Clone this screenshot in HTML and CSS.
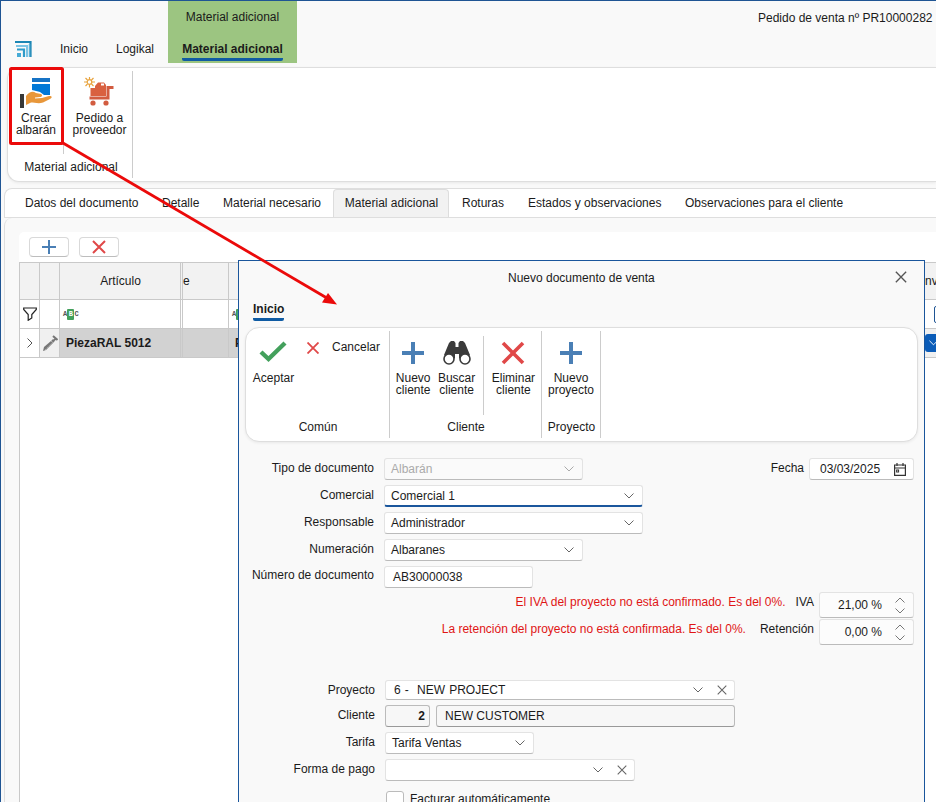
FILE: index.html
```html
<!DOCTYPE html>
<html lang="es">
<head>
<meta charset="utf-8">
<title>Pedido de venta</title>
<link rel="stylesheet" href="styles.css">
</head>
<body>
<svg class="defs" width="0" height="0">
  <symbol id="chev" viewBox="0 0 10 6"><path d="M.5 .5 5 5 9.500 .5" fill="none" stroke="currentColor"/></symbol>
  <symbol id="x" viewBox="0 0 10 10"><path d="M.7 .7 9.300 9.300M9.300 .7 .7 9.300" fill="none" stroke="currentColor" stroke-width="1.100"/></symbol>
  <symbol id="bigx" viewBox="0 0 24 24"><path d="M2 2 22 22M22 2 2 22" fill="none" stroke="currentColor" stroke-width="3.600"/></symbol>
  <symbol id="plus" viewBox="0 0 22 22"><path d="M11 0V22M0 11H22" fill="none" stroke="currentColor" stroke-width="4"/></symbol>
</svg>
<main class="window">
  <header class="titlebar">
    <nav class="menu">
      <svg class="logo" width="17" height="17" viewBox="0 0 17 17"><path d="M0 1H15.500V16" fill="none" stroke="#1c86b4" stroke-width="2.200"/><path d="M1 5H12V16" fill="none" stroke="#7cc4e4" stroke-width="2"/><path d="M2 8.500H9V16" fill="none" stroke="#2f9bc9" stroke-width="2.200"/><path d="M14.500 3V16" stroke="#5cb0d6" stroke-width="1.500"/><rect x="2" y="12" width="4" height="4" fill="#46abd6"/></svg>
      <span class="m-inicio">Inicio</span><span class="m-logikal">Logikal</span>
    </nav>
    <div class="context"><span>Material adicional</span><b>Material adicional</b></div>
    <span class="doc">Pedido de venta nº PR10000282</span>
  </header>
  <section class="ribbon">
    <div class="rgroup">
      <div class="rbuttons">
        <div class="rbtn first">
          <svg width="34" height="33" viewBox="0 0 34 33"><rect x="13" y="2" width="18" height="4" fill="#1673c5"/><path d="M13 8H31V19H25L21 16 13 14Z" fill="#0078d7"/><rect x="1" y="18" width="4" height="14" fill="#383838"/><path d="M7 20C11 15 14 15 17 17L22 18C24 19 23 21 21 21L16 21.500 16 22.500 23 22 30 20C34 20 33 22 31 23L24 26.500C20 28 15 26.500 12 26.500L7 29Z" fill="#e8973a"/></svg>
          <span>Crear<br>albarán</span>
        </div>
        <div class="rbtn second">
          <svg width="32" height="33" viewBox="0 0 32 33"><g stroke="#e8a33d" stroke-width="1.200" fill="none"><circle cx="6.500" cy="6" r="2.300"/><path d="M6.500 1V3M6.500 9V11.500M1 6H4M9 6H12M2.500 2 4.500 4M8.500 8 10.500 10M10.500 2 8.500 4M4.500 8 2.500 10"/></g><path d="M12 10 15 6.500H21L23 9V20H7.500V12H12Z" fill="#d9603f"/><rect x="18" y="7.500" width="3" height="2" fill="#fff"/><path d="M30.500 11.500H25V22H6.500" fill="none" stroke="#d25c40" stroke-width="3"/><circle cx="10" cy="27" r="2.600" fill="#d25c40"/><circle cx="23" cy="27" r="2.600" fill="#d25c40"/></svg>
          <span>Pedido a<br>proveedor</span>
        </div>
      </div>
      <div class="rcaption">Material adicional</div>
    </div>
  </section>
  <nav class="tabs">
    <span class="t1">Datos del documento</span><span class="t2">Detalle</span><span class="t3">Material necesario</span><span class="t4">Material adicional</span><span class="t5">Roturas</span><span class="t6">Estados y observaciones</span><span>Observaciones para el cliente</span>
  </nav>
  <section class="content">
    <div class="sheet">
      <div class="tools">
        <span class="tool blue"><svg width="14" height="14" viewBox="0 0 14 14"><path d="M7 0V14M0 7H14" stroke="currentColor" stroke-width="2"/></svg></span>
        <span class="tool red"><svg width="14" height="14" viewBox="0 0 14 14"><path d="M1 1 13 13M13 1 1 13" stroke="currentColor" stroke-width="2"/></svg></span>
      </div>
      <div class="grid">
        <div class="row head"><i></i><i></i><i class="art">Artículo</i><i class="e">e</i><i class="wide"></i><i class="end">nv</i></div>
        <div class="row filter">
          <i><svg width="14" height="14" viewBox="0 0 14 14"><path d="M.7 1H13.300V2.500L8.800 7.500V11L5.200 13.300V7.500L.7 2.500Z" fill="none" stroke="#222" stroke-width="1.200"/></svg></i><i></i>
          <i class="abc"><small>A<mark>B</mark>C</small></i><i></i><i class="wide abc"><small>A<mark>B</mark>C</small></i><i class="end"><span class="box"></span></i>
        </div>
        <div class="row data">
          <i><svg class="turn" width="10" height="6"><use href="#chev"/></svg></i>
          <i class="pen"><svg width="16" height="17" viewBox="0 0 16 17"><path d="M1 16 2 12 9 6 11 8 4 15Z" fill="#777"/><path d="M3 15 11 7" stroke="#aaa" stroke-dasharray="2 1"/><path d="M10 5 12 7M11 6 14 3.500M11 1 15.500 5" stroke="#777" stroke-width="2"/></svg></i>
          <i class="name">PiezaRAL 5012</i><i></i><i class="wide name2">P</i><i class="end"><span class="checked"><svg width="9" height="6"><use href="#chev"/></svg></span></i>
        </div>
        <div class="row rest"><i></i><i class="end"></i></div>
      </div>
    </div>
  </section>

  <section class="dialog">
    <header class="dtitle"><span>Nuevo documento de venta</span><svg width="12" height="12"><use href="#x"/></svg></header>
    <div class="dtab"><b>Inicio</b></div>
    <div class="dribbon">
      <div class="dgroup comun">
        <div class="dbtns">
          <div class="dbtn"><svg width="28" height="22" viewBox="0 0 28 22"><path d="M2 11 9.500 18 26 2" fill="none" stroke="#43a05c" stroke-width="4.400"/></svg><span>Aceptar</span></div>
          <div class="cancel"><svg width="12" height="12" viewBox="0 0 12 12"><path d="M.5 .5 11.500 11.500M11.500 .5 .5 11.500" stroke="#e04848" stroke-width="1.800"/></svg><span>Cancelar</span></div>
        </div>
        <div class="dcap">Común</div>
      </div>
      <div class="dgroup cliente">
        <div class="dbtns">
          <div class="dbtn"><svg class="blue" width="22" height="22"><use href="#plus"/></svg><span>Nuevo<br>cliente</span></div>
          <div class="dbtn bus"><svg width="28" height="24" viewBox="0 0 28 24"><path d="M8 0H11L12.500 2V6H15.500V2L17 0H20L22 2 27 14 21 21 16 17V13H12V17L7 21 1 14 6 2Z" fill="#3b3b3b"/><g fill="#fff" stroke="#3b3b3b" stroke-width="1.600"><circle cx="6" cy="18" r="5"/><circle cx="22" cy="18" r="5"/></g></svg><span>Buscar<br>cliente</span></div>
          <div class="dbtn eli"><svg class="red" width="24" height="24"><use href="#bigx"/></svg><span>Eliminar<br>cliente</span></div>
        </div>
        <div class="dcap">Cliente</div>
      </div>
      <div class="dgroup proyecto">
        <div class="dbtns"><div class="dbtn"><svg class="blue" width="22" height="22"><use href="#plus"/></svg><span>Nuevo<br>proyecto</span></div></div>
        <div class="dcap">Proyecto</div>
      </div>
    </div>
    <form class="form">
      <div class="frow"><label>Tipo de documento</label><div class="field w199 disabled"><span>Albarán</span><svg width="10" height="6"><use href="#chev"/></svg></div>
        <div class="right"><label>Fecha</label><div class="field date"><span>03/03/2025</span><svg width="12" height="13" viewBox="0 0 12 13"><path d="M.6 2H11.400V12.400H.6ZM.6 5H11.400M3 0V3M9 0V3" fill="none" stroke="#333" stroke-width="1.200"/><rect x="2.600" y="7" width="2" height="2" fill="none" stroke="#333"/></svg></div></div></div>
      <div class="frow"><label>Comercial</label><div class="field w259 focus"><span>Comercial 1</span><svg width="10" height="6"><use href="#chev"/></svg></div></div>
      <div class="frow"><label>Responsable</label><div class="field w259"><span>Administrador</span><svg width="10" height="6"><use href="#chev"/></svg></div></div>
      <div class="frow"><label>Numeración</label><div class="field w199"><span>Albaranes</span><svg width="10" height="6"><use href="#chev"/></svg></div></div>
      <div class="frow num"><label>Número de documento</label><div class="field w149"><span>AB30000038</span></div></div>
      <div class="tax"><span class="warn">El IVA del proyecto no está confirmado. Es del 0%.</span><span class="tl">IVA</span><div class="field spin"><span>21,00 %</span><div class="arrows"><svg class="up" width="10" height="6"><use href="#chev"/></svg><svg width="10" height="6"><use href="#chev"/></svg></div></div></div>
      <div class="tax second-tax"><span class="warn">La retención del proyecto no está confirmada. Es del 0%.</span><span class="tl ret">Retención</span><div class="field spin"><span>0,00 %</span><div class="arrows"><svg class="up" width="10" height="6"><use href="#chev"/></svg><svg width="10" height="6"><use href="#chev"/></svg></div></div></div>
      <div class="lower">
        <div class="frow proj"><label>Proyecto</label><div class="field w350"><span class="pre">6 -  NEW PROJECT</span><svg width="10" height="6"><use href="#chev"/></svg><svg class="clear" width="10" height="10"><use href="#x"/></svg></div></div>
        <div class="frow"><label>Cliente</label><div class="field code"><b>2</b></div><div class="field cust"><span>NEW CUSTOMER</span></div></div>
        <div class="frow"><label>Tarifa</label><div class="field w149"><span>Tarifa Ventas</span><svg width="10" height="6"><use href="#chev"/></svg></div></div>
        <div class="frow"><label>Forma de pago</label><div class="field w250"><span></span><svg width="10" height="6"><use href="#chev"/></svg><svg class="clear" width="10" height="10"><use href="#x"/></svg></div></div>
        <div class="auto"><span class="cb"></span><span>Facturar automáticamente</span></div>
      </div>
    </form>
  </section>

  <svg class="callout" width="936" height="802" viewBox="0 0 936 802"><rect x="10.500" y="68.500" width="52" height="75" rx="1" fill="none" stroke="#eb0a0a" stroke-width="3"/><path d="M63 143 326 297.500" stroke="#eb0a0a" stroke-width="2.800"/><path d="M337 304.500 322 302.500 328 293Z" fill="#eb0a0a"/></svg>
</main>
</body>
</html>
```

FILE: styles.css
```css
* { box-sizing: border-box; }
body { margin: 0; width: 936px; height: 802px; overflow: hidden; font: 12px/14px "Liberation Sans", Arial, sans-serif; color: #1b1b1b; }
svg { display: block; flex: none; }
i { font-style: normal; }
.defs { position: absolute; }
.window { position: relative; width: 936px; height: 802px; overflow: hidden; background: #f9f9f9; border: solid #1f5594; border-width: 1px 0 0 1px; display: flex; flex-direction: column; }
.blue { color: #4a7fb5; }
.red { color: #e04848; }

.titlebar { display: flex; height: 66px; flex: none; align-items: flex-start; }
.menu { width: 167px; display: flex; padding: 40px 0 0 14px; white-space: nowrap; }
.menu span { margin-top: 1px; }
.menu .m-inicio { margin-left: 28px; width: 56px; }
.context { width: 129px; height: 62px; background: #9cc581; display: flex; flex-direction: column; align-items: center; padding-top: 9px; white-space: nowrap; }
.context b { margin-top: 18px; padding-bottom: 2px; border-bottom: 3px solid #0f5ba3; border-radius: 2px; }
.doc { margin: 10px 3.500px 0 auto; }

.ribbon { height: 115px; margin-left: 6px; flex: none; background: #fff; border: 1px solid #dedede; border-right: 0; border-radius: 12px 0 0 12px; padding: 3px 0 3px 1px; box-shadow: 0 1px 3px #0001; }
.rgroup { width: 124px; height: 107px; border-right: 1px solid #ccc; }
.rbuttons { display: flex; height: 84px; }
.rbtn { display: flex; flex-direction: column; align-items: center; text-align: center; line-height: 12px; padding-top: 5px; height: 83px; }
.rbtn span { margin-top: 3px; }
.rbtn.first { width: 55px; border-right: 1px solid #ccc; }
.rbtn.second { width: 68px; padding-left: 3px; }
.rbtn.second svg { margin-left: -2px; }
.rcaption { text-align: center; margin-top: 5px; padding-left: 1px; }

.tabs { height: 30px; margin: 6px 0 0 3px; flex: none; display: flex; background: #fff; border: solid #dedede; border-width: 1px 0 1px 1px; border-radius: 8px 0 0 0; padding-left: 20px; white-space: nowrap; line-height: 29px; }
.t1 { width: 137px; } .t2 { width: 61px; } .t3 { width: 110px; }
.t4 { width: 116px; padding-left: 1px; text-align: center; background: #f2f2f2; border: solid #ddd; border-width: 1px 1px 0; border-radius: 4px 4px 0 0; height: 28px; line-height: 27px; margin-top: 0; }
.t5 { margin-left: 13px; width: 66px; } .t6 { width: 157px; }
.content { flex: 1; margin-left: 3px; border-left: 1px solid #dedede; border-radius: 8px 0 0 0; padding: 14px 0 0 14px; }
.sheet { height: 100%; background: #fff; border-radius: 5px 0 0 0; display: flex; flex-direction: column; }
.tools { display: flex; gap: 10px; padding: 5px 0 0 10px; height: 30px; flex: none; }
.tool { width: 40px; height: 20px; border: 1px solid #d9d9d9; border-bottom-color: #bdbdbd; border-radius: 4px; display: flex; align-items: center; justify-content: center; }
.grid { flex: 1; display: flex; flex-direction: column; border-left: 1px solid #c9c9c9; }
.row { display: grid; grid-template-columns: 20px 20px 123px 46px 1fr 12px; border-bottom: 1px solid #c9c9c9; }
.row i { border-right: 1px solid #c9c9c9; display: flex; align-items: center; justify-content: center; overflow: hidden; }
.row i:nth-child(3) { border-right: 3px double #c9c9c9; }
.row .end { border: 0; justify-content: flex-start; padding-left: 1px; }
.head { height: 38px; background: #f2f2f2; border-top: 1px solid #c9c9c9; }
.row .art { padding-left: 1px; }
.row .e { justify-content: flex-start; }
.filter { height: 29px; }
.row .abc { justify-content: flex-start; padding-left: 3px; }
.abc small { font: bold 7px/11px "Liberation Mono", monospace; display: flex; align-items: center; color: #555; }
.abc mark { background: #43a05c; color: #fff; padding: 0 1.500px; border-radius: 1px; }
.box { width: 17px; height: 17px; flex: none; margin-left: 9px; border: 1px solid #1f5594; border-radius: 2px; }
.data { height: 29px; }
.turn { transform: rotate(-90deg); color: #555; }
.row .pen { background: #f0f0f0; }
.data i:nth-child(n+3) { background: #d2d2d2; font-weight: bold; }
.data .name { justify-content: flex-start; padding-left: 6px; }
.row .name2 { justify-content: flex-start; padding-left: 6px; }
.data i.end { background: #f0f0f0; }
.checked { width: 18px; height: 18px; flex: none; background: #0b5cb8; border-radius: 3px; display: flex; align-items: center; padding-left: 4px; color: #fff; }
.row.rest { flex: 1; grid-template-columns: 1fr 12px; border: 0; }
.row.rest i { border: 0; }

.dialog { position: absolute; left: 237px; top: 259px; width: 687px; height: 560px; background: #f9f9f9; border: 1px solid #1a569c; padding: 0 6px; }
.dtitle { height: 36px; display: flex; align-items: center; padding-right: 11px; color: #1b1b1b; }
.dtitle span { margin: -2px 0 0 263px; }
.dtitle svg { margin: -4px 0 0 auto; color: #555; }
.dtab { height: 30px; padding: 5px 0 0 8px; }
.dtab b { display: inline-block; height: 19px; border-bottom: 3px solid #0f5ba3; border-radius: 2px; }
.dribbon { height: 115px; display: flex; background: #fff; border: 1px solid #dedede; border-radius: 14px; padding: 3px 0 3px; box-shadow: 0 1px 3px #0001; }
.dgroup { border-right: 1px solid #ccc; height: 107px; }
.comun { width: 144px; } .cliente { width: 152px; } .proyecto { width: 59px; }
.dbtns { display: flex; height: 84px; padding-top: 5px; }
.dbtn { display: flex; flex-direction: column; align-items: center; text-align: center; line-height: 12px; padding-top: 5px; width: 43px; }
.dbtn svg { height: 24px; }
.dbtn svg.blue { height: 22px; margin: 1px 0; }
.dbtn span { margin-top: 7px; }
.comun .dbtn { width: 55px; }
.comun .dbtn svg { margin-top: -1px; margin-bottom: 1px; margin-left: -2px; }
.cliente .dbtns { padding-left: 2px; }
.dbtn.bus { width: 49px; padding-right: 5px; border-right: 1px solid #ccc; margin-left: 1px; }
.dbtn.bus, .cliente .dbtn:first-child { height: 79px; }
.dbtn.eli { width: 58px; padding-left: 2px; }
.proyecto .dbtn { width: 59px; }
.cancel { display: flex; gap: 13px; padding: 4px 0 0 6px; }
.cancel svg { margin-top: 2px; }
.dcap { text-align: center; margin-top: 5px; padding-left: 1px; }

.form { padding: 15px 4px 0 5px; display: flex; flex-direction: column; }
.frow { display: flex; height: 27px; align-items: flex-start; white-space: nowrap; }
.frow > label { width: 125px; text-align: right; margin: 4px 9px 0 0; flex: none; }
.form > .frow > label { margin: 4px 10px 0 -1px; }
.form > .num > label { margin-top: 3px; }
.field { height: 22px; margin-top: 1px; display: flex; align-items: center; background: #fff; border: 1px solid #e3e3e3; border-bottom-color: #bbb; border-radius: 3px; padding: 0 8px 0 6px; flex: none; color: #1b1b1b; }
.field > svg { color: #666; }
.field > span { flex: 1; white-space: pre; }
.form .field.disabled, .form .field.disabled svg { background: #fafafa; color: #aaa; }
.focus { border-bottom: 2px solid #1a569c; }
.w199 { width: 199px; } .w259 { width: 259px; } .w149 { width: 149px; } .w350 { width: 350px; } .w250 { width: 250px; }
.num .field { padding-left: 8px; }
.right { margin-left: auto; display: flex; }
.right label { margin: 4px 5px 0 0; }
.date { width: 105px; padding: 0 7px 0 10px; }
.tax { display: flex; height: 27px; justify-content: flex-end; white-space: nowrap; }
.tax > span { margin-top: 3px; }
.warn { color: #e01515; }
.tax > .tl { margin: 3px 5px 0 10px; }
.tax > .tl.ret { margin-left: 14px; }
.spin { width: 95px; height: 26px; margin: 0; background: #fcfcfc; padding: 0 8px 0 6px; }
.spin > span { text-align: right; padding-right: 13px; }
.arrows { display: flex; flex-direction: column; gap: 5px; color: #777; }
.up { transform: rotate(180deg); }
.lower { padding: 33px 0 0 1px; }
.lower .frow > label { width: 124px; margin-right: 10px; }
.lower .proj { height: 25px; }
.form .proj .field { height: 20px; padding-left: 8px; margin-top: 1px; word-spacing: .8px; }
.field .clear { margin-left: 14px; }
.form .w350, .w250 { padding-right: 7px; }
.form .code, .form .cust { background: #f7f7f7; border-color: #bbb; border-bottom-color: #999; }
.form .code { width: 45px; justify-content: flex-end; padding-right: 4px; margin-right: 6px; }
.form .cust { width: 299px; padding-left: 8px; }
.auto { display: flex; gap: 6px; padding: 6px 0 0 135px; }
.cb { width: 18px; height: 18px; background: #fff; border: 1px solid #bbb; border-radius: 3px; }
.auto span:last-child { margin-top: 1px; }
.callout { position: absolute; left: -1px; top: -1px; pointer-events: none; }
```
